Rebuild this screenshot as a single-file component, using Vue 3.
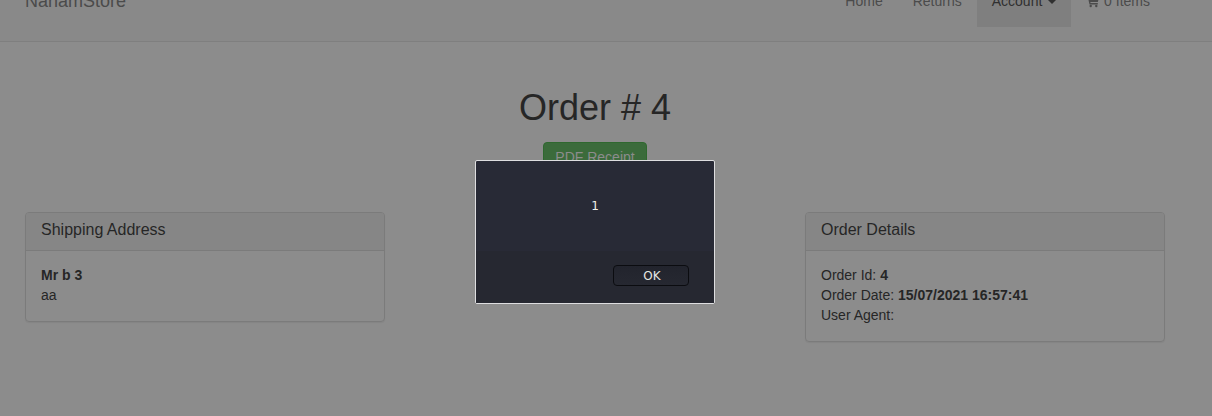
<script setup>
const orderRows = [
  { label: 'Order Id:', value: '4' },
  { label: 'Order Date:', value: '15/07/2021 16:57:41' },
  { label: 'User Agent:', value: '' },
]
</script>

<template>
  <div class="page">
    <header class="navbar">
      <div class="container bar">
        <a class="brand">NahamStore</a>
        <nav class="links">
          <a class="link">Home</a>
          <a class="link">Returns</a>
          <a class="link open">Account <span class="caret"></span></a>
          <a class="link">
            <svg class="cart" width="14" height="14" viewBox="0 0 14 14">
              <path d="M0 1h2.7l.6 1.9h9.9L11.8 8H4.3l.3 1.1h7.2v1.4H3.5L1.7 2.4H0z" fill="currentColor" />
              <circle cx="4.7" cy="12" r="1.2" fill="currentColor" />
              <circle cx="10.3" cy="12" r="1.2" fill="currentColor" />
            </svg>
            0 Items</a>
        </nav>
      </div>
    </header>
    <main class="container">
      <h1>Order # 4</h1>
      <div class="actions"><a class="btn">PDF Receipt</a></div>
      <div class="columns">
        <section class="panel">
          <h2>Shipping Address</h2>
          <div class="body">
            <div><b>Mr b 3</b></div>
            <div>aa</div>
          </div>
        </section>
        <section class="panel">
          <h2>Order Details</h2>
          <div class="body">
            <div v-for="row in orderRows" :key="row.label">{{ row.label }} <b>{{ row.value }}</b></div>
          </div>
        </section>
      </div>
    </main>
    <div class="dialog" role="alertdialog">
      <div class="message">1</div>
      <div class="footer"><button>OK</button></div>
    </div>
  </div>
</template>

<style>
html, body { margin: 0; background: #8c8c8c; }
</style>

<style scoped>
* { box-sizing: border-box; }
.page {
  position: relative;
  height: 416px;
  overflow: hidden;
  background: #8c8c8c;
  color: #262626;
  font: 14px/20px "Liberation Sans", Arial, sans-serif;
}
.container { width: 1140px; margin-left: 25px; }
.navbar { height: 42px; background: #898989; border-bottom: 1px solid #7f7f7f; }
.bar { display: flex; justify-content: space-between; }
.brand { margin-top: -9px; font-size: 18px; color: #4b4b4b; }
.links { display: flex; margin-top: -24px; }
.link { height: 51px; padding: 15px; color: #4b4b4b; white-space: nowrap; }
.link.open { background: #7f7f7f; color: #303030; }
.caret {
  display: inline-block;
  margin-left: 2px;
  vertical-align: middle;
  border-top: 4px solid;
  border-left: 4px solid transparent;
  border-right: 4px solid transparent;
}
.cart { vertical-align: -2px; }
h1 { margin: 46px 0 0; font-size: 36px; line-height: 40px; font-weight: 400; text-align: center; }
.actions { display: flex; justify-content: center; margin-top: 14px; }
.btn {
  width: 104px;
  height: 34px;
  padding: 4px 0;
  text-align: center;
  border: 1px solid #2f682f;
  border-radius: 4px;
  background: #3b6b3b;
  color: #8c8c8c;
}
.columns { display: flex; justify-content: space-between; align-items: flex-start; margin-top: 36px; }
.panel {
  width: 360px;
  border: 1px solid #7b7b7b;
  border-radius: 4px;
  box-shadow: 0 1px 1px rgba(0, 0, 0, 0.05);
}
.panel h2 {
  height: 38px;
  margin: 0;
  padding: 8px 15px;
  border-bottom: 1px solid #7b7b7b;
  background: #868686;
  border-radius: 3px 3px 0 0;
  font-size: 16px;
  line-height: 18px;
  font-weight: 400;
}
.body { padding: 14px 15px 16px; }
.dialog {
  position: absolute;
  top: 160px;
  left: 475px;
  width: 240px;
  height: 144px;
  border: 1px solid #dedee0;
  border-radius: 2px;
  background: #282a36;
  color: #f0f0ea;
  font: 12px/16px "DejaVu Sans", "Noto Sans", sans-serif;
}
.message { height: 90px; padding-top: 37px; text-align: center; }
.footer {
  display: flex;
  justify-content: flex-end;
  height: 52px;
  padding: 14px 25px 0 0;
  background: #262831;
}
button {
  width: 76px;
  height: 21px;
  padding: 0 0 0 2px;
  border: 1px solid #0b0c10;
  border-radius: 4px;
  background: linear-gradient(#22242d, #262831);
  color: #e6e6e2;
  font: 12px/18px "DejaVu Sans", sans-serif;
}
</style>
